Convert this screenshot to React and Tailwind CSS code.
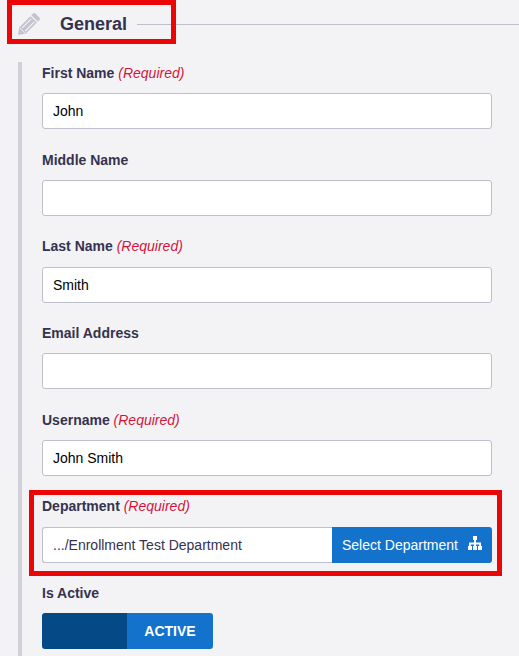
const inputBox =
  'block h-9 w-[450px] rounded-[3px] border border-[#bfbecb] bg-white px-2.5 text-[14px] text-black outline-none';

function Label({ children, required }) {
  return (
    <div className="mb-[10.33px] h-5 whitespace-nowrap text-[14px] leading-5">
      <span className="font-bold text-[#35324f]">{children}</span>
      {required && <span className="italic text-[#d5143c]"> (Required)</span>}
    </div>
  );
}

function Field({ label, required, children }) {
  return (
    <div className="relative h-[86.67px]">
      <Label required={required}>{label}</Label>
      {children}
    </div>
  );
}

function PencilIcon() {
  return (
    <svg className="h-[22px] w-[22px] shrink-0" viewBox="0 0 22 22" fill="#c4c3cf">
      <path d="M14.8 0.8Q16.2 -0.5 17.6 0.7L21.3 4.4Q22.5 5.8 21.3 7.1L19.8 8.6L13.3 2.3Z" />
      <path d="M12.4 3.2L18.9 9.6L7.6 20.7L0 22L1.2 14.4Z" />
      <path d="M13.2 5.9L4.2 14.9M16.3 8.9L7.2 18" stroke="#f3f3f5" strokeWidth="1.2" fill="none" />
      <path d="M1.8 15L7 20.2" stroke="#f3f3f5" strokeWidth="0.9" fill="none" />
    </svg>
  );
}

function SitemapIcon() {
  return (
    <svg className="h-[14px] w-[14px] shrink-0" viewBox="0 0 14 14" fill="white">
      <path d="M5 0h4v4H8v2.5h5V10h1v4h-4v-4h1.2V8.6H8V10h1v4H5v-4h1V8.6H2.8V10H4v4H0v-4h1V6.5h5V4H5z" />
    </svg>
  );
}

export default function App() {
  return (
    <main
      className="relative h-[656px] w-[519px] overflow-hidden bg-[#f3f3f5]"
      style={{ fontFamily: '"Liberation Sans", Arial, sans-serif' }}
    >
      <header className="flex h-12 items-center pl-[18px]">
        <PencilIcon />
        <h2 className="ml-5 text-[18px] leading-6 font-bold text-[#35324f]">General</h2>
        <div className="ml-2.5 h-px flex-1 bg-[#bfbecb]" />
      </header>

      <section className="mt-[14px] ml-[18px] h-[594px] border-l-4 border-[#d0d0d8] pt-[1px] pl-5">
        <Field label="First Name" required>
          <input className={inputBox} defaultValue="John" />
        </Field>
        <Field label="Middle Name">
          <input className={inputBox} />
        </Field>
        <Field label="Last Name" required>
          <input className={inputBox} defaultValue="Smith" />
        </Field>
        <Field label="Email Address">
          <input className={inputBox} />
        </Field>
        <Field label="Username" required>
          <input className={inputBox} defaultValue="John Smith" />
        </Field>
        <Field label="Department" required>
          <div className="flex h-9 w-[450px]">
            <div className="flex w-[290px] items-center rounded-l-[3px] border border-r-0 border-[#bfbecb] bg-white pt-0.5 pl-2.5 text-[14px] text-[#35324f]">
              .../Enrollment Test Department
            </div>
            <button className="flex w-[160px] items-center rounded-r-[3px] bg-[#1272cc] pt-0.5 pl-2.5 text-[14px] whitespace-nowrap text-white">
              <span className="w-[126px] text-left">Select Department</span>
              <span className="mb-[5.3px]">
                <SitemapIcon />
              </span>
            </button>
          </div>
          <div className="pointer-events-none absolute top-[-6px] left-[-13px] h-[86px] w-[473px] border-5 border-[#ea0606]" />
        </Field>
        <Field label="Is Active">
          <button className="flex h-9 w-[171px] overflow-hidden rounded-[3px] text-[14px] font-bold text-white">
            <span className="h-full w-[85px] bg-[#054a87]" />
            <span className="flex h-full w-[86px] items-center justify-center bg-[#1272cc]">ACTIVE</span>
          </button>
        </Field>
      </section>

      <div className="pointer-events-none absolute top-0 left-[7px] h-11 w-[169px] border-5 border-[#ea0606]" />
    </main>
  );
}
